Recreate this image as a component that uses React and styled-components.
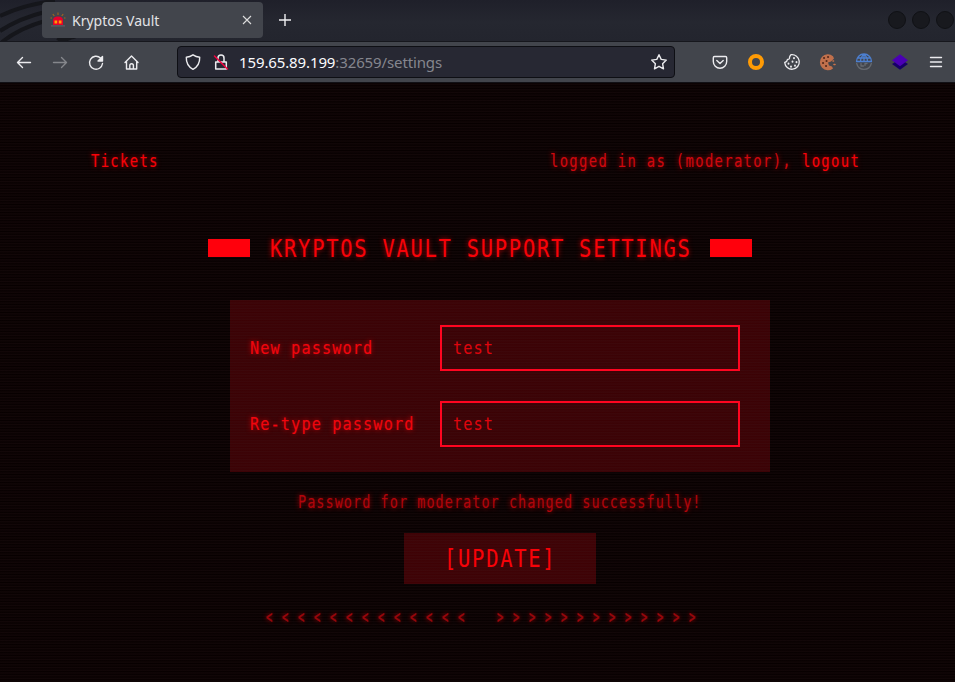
import React from 'react';
import styled, { createGlobalStyle } from 'styled-components';

const GlobalStyle = createGlobalStyle`
  * { box-sizing: border-box; }
  html, body { margin: 0; padding: 0; background: #080000; }
  body { width: 955px; height: 682px; overflow: hidden; }
`;

const Window = styled.div`
  width: 955px; height: 682px; display: flex; flex-direction: column;
  font-family: "Noto Sans", sans-serif; color: #fbfbfe;
`;
const TabStrip = styled.div`
  position: relative; height: 42px; display: flex; align-items: flex-start; padding: 2px 0 0 42px;
  background: linear-gradient(#1f202a, #252730 55%, #23252e); border-bottom: 1px solid #16171d; overflow: hidden;
`;
const Wallpaper = styled.svg`position: absolute; left: 0; top: 0;`;
const Tab = styled.div`
  position: relative; width: 221px; height: 36px; border-radius: 4px; background: #42454c;
  display: flex; align-items: center; padding: 0 10px 0 8px; font-size: 14px;
`;
const Favicon = styled.svg`width: 16px; height: 16px; flex: none; fill: none;`;
const TabTitle = styled.span`flex: 1; margin-left: 6px; white-space: nowrap; color: #e2e3e6;`;
const NewTab = styled.div`margin: 11px 0 0 15px; height: 14px; display: flex;`;
const WindowDots = styled.div`
  display: flex; gap: 6px; margin: 9px 1px 0 auto;
`;
const Dot = styled.i`
  width: 18px; height: 18px; border-radius: 50%; background: #18191e; border: 1px solid #101115; flex: none;
`;
const Toolbar = styled.div`
  height: 40px; background: #42454c; display: flex; align-items: center; padding: 0 9px 0 14px;
`;
const NavButtons = styled.div`display: flex; gap: 16px; width: 163px;`;
const AddressBar = styled.div`
  width: 498px; height: 32px; border: 1px solid #0e0f14; border-radius: 4px; background: #272833;
  display: flex; align-items: center; padding: 0 5px 0 5px; gap: 8px;
`;
const Address = styled.div`
  flex: 1; font-size: 15px; letter-spacing: -0.12px; white-space: nowrap; color: #85868e;
  b { font-weight: 400; color: #fbfbfe; }
`;
const Extensions = styled.div`display: flex; gap: 16px; margin-left: auto;`;
const Icon = styled.svg`
  width: 20px; height: 20px; flex: none; fill: none; stroke: ${p => p.$color || '#ececef'};
  stroke-width: ${p => p.$weight || 1.3}; stroke-linecap: round; stroke-linejoin: round;
`;

const Page = styled.main`
  position: relative; height: 600px; border-top: 1px solid #111015; background: #070000;
  display: flex; flex-direction: column; align-items: center; overflow: hidden;
`;
const Scanlines = styled.div`
  position: absolute; inset: 0; pointer-events: none;
  background: repeating-linear-gradient(rgba(70, 40, 45, 0) 0px, rgba(70, 40, 45, 0.18) 1.35px, rgba(70, 40, 45, 0) 2.7px);
`;
const TermBox = styled.span`
  position: relative; z-index: 1;
  display: inline-block; width: ${p => p.$n * p.$pitch}px; height: 30px; white-space: pre;
  span {
    display: block; width: max-content; transform-origin: 0 50%; transform: scaleX(${p => p.$squeeze});
    font: ${p => p.$size}px/30px "DejaVu Sans Mono", monospace;
    letter-spacing: ${p => p.$pitch / p.$squeeze - p.$size * 0.602}px;
    color: ${p => p.$color};
    -webkit-text-stroke: ${p => p.$stroke}px ${p => p.$color};
    text-shadow: ${p => (p.$glow ? '0 0 6px rgba(255, 0, 10, 0.7)' : 'none')};
  }
`;
function Term({ children, size = 17.5, pitch = 9.68, color = '#f80208', glow = true, squeeze = 0.79, stroke = 0.15 }) {
  return (
    <TermBox $n={children.length} $size={size} $pitch={pitch} $color={color} $glow={glow} $squeeze={squeeze} $stroke={stroke}>
      <span>{children}</span>
    </TermBox>
  );
}
const Nav = styled.nav`
  width: 769px; margin: 63px 0 0 -4px; display: flex; justify-content: space-between;
`;
const Heading = styled.h1`
  margin: 56px 0 0 5px; display: flex; align-items: center; height: 32px; font-weight: 400;
`;
const Block = styled.i`position: relative; z-index: 1; width: 42px; height: 18px; background: #ff000c;`;
const HeadingText = styled.div`margin: 0 19px 0 20px; display: flex; width: 421px;`;
const Panel = styled.section`
  width: 540px; height: 172px; margin: 36px 0 0 45px; padding: 25px 30px 25px 20px; background: #3b0104;
  display: flex; flex-direction: column; gap: 30px;
`;
const Field = styled.label`display: flex; align-items: center; justify-content: space-between; height: 46px;`;
const Input = styled.div`
  width: 300px; height: 46px; border: 2px solid #ff0520; padding: 6px 11px; position: relative; z-index: 1;
`;
const Message = styled.div`margin: 15px 0 0 45px; height: 30px;`;
const Update = styled.button`
  width: 192px; height: 51px; margin: 16px 0 0 45px; border: 0; padding: 0 0 2px; background: #3e0104;
  display: flex; align-items: center; justify-content: center;
`;
const Arrows = styled.div`margin: 18px 0 0 15px; display: flex; gap: 23px; height: 30px;`;

const cap = { size: 25.5, pitch: 14.05, squeeze: 0.8, stroke: 0.1 };
const body = { size: 18.5, pitch: 10.28, squeeze: 0.82 };
const arrow = { size: 18, pitch: 16, squeeze: 0.58, color: '#98070c', stroke: 0.5 };

export default function App() {
  return (
    <Window>
      <GlobalStyle />
      <TabStrip>
        <Wallpaper width="150" height="42" fill="none" stroke="#15161b" strokeWidth="4">
          <path d="M0 16Q25 4 55 1M0 31Q20 18 45 12M2 42Q20 28 45 21" />
          <path d="M60 42Q64 36 75 34" strokeWidth="9" />
        </Wallpaper>
        <Tab>
          <Favicon viewBox="0 0 16 16">
            <path d="M3 13V8.500q0-4 5-4t5 4V13z" fill="#e5002c" />
            <path d="M1 13.300h14v1.200H1z" fill="#5e6066" />
            <path d="M4.500 8.500h2.700v3H4.500zM8.800 8.500h2.700v3H8.800z" fill="#ff9d00" />
            <path d="M8 0.500v2.500M2.800 2l1.500 2M13.200 2l-1.500 2M0.500 6h1.500M15.500 6H14" stroke="#a5651d" strokeWidth="1.100" />
          </Favicon>
          <TabTitle>Kryptos Vault</TabTitle>
          <svg width="12" height="12" viewBox="0 0 12 12" stroke="#ddd" strokeWidth="1.1"><path d="M2 2l8 8M10 2l-8 8" /></svg>
        </Tab>
        <NewTab><svg width="14" height="14" viewBox="0 0 14 14" stroke="#f0f0f2" strokeWidth="1.4"><path d="M7 1v12M1 7h12" /></svg></NewTab>
        <WindowDots><Dot /><Dot /><Dot /></WindowDots>
      </TabStrip>
      <Toolbar>
        <NavButtons>
          <Icon viewBox="0 0 20 20" $weight={1.4}><path d="M3.5 10.500h13M8.500 5.500l-5 5 5 5" /></Icon>
          <Icon viewBox="0 0 20 20" $weight={1.4} $color="#85878c"><path d="M3.5 10.500h13M11.500 5.500l5 5-5 5" /></Icon>
          <Icon viewBox="0 0 20 20" $weight={1.4}><path d="M16.500 11.500A6.500 6.500 0 1 1 14.500 6" /><path d="M16.500 4.500V9H12z" fill="#ececef" /></Icon>
          <Icon viewBox="0 0 20 20" $weight={1.4}><path d="M3 10.500L9.500 4l6.500 6.500M4.500 9.500V17h10.200V9.500M7.800 17v-3.500a1.800 1.800 0 0 1 3.600 0V17" /></Icon>
        </NavButtons>
        <AddressBar>
          <Icon viewBox="0 0 20 20" $weight={1.4}><path d="M10 2.800Q13 4.800 16.700 5.200Q17 13.500 10 17.300Q3 13.500 3.300 5.200Q7 4.800 10 2.800z" /></Icon>
          <Icon viewBox="0 0 20 20" $weight={1.5}>
            <path d="M4.700 10h10.600v7H4.700zM7 10V6a3 3 0 0 1 6 0v4" />
            <path d="M3.500 4l13 13" stroke="#f5003f" />
          </Icon>
          <Address><b>159.65.89.199</b>:32659/settings</Address>
          <Icon viewBox="0 0 20 20" $weight={1.4}><path d="M10 2.700l2.200 4.700 5.100.7-3.700 3.600.9 5.100-4.500-2.500-4.500 2.500.9-5.100-3.700-3.600 5.100-.7z" /></Icon>
        </AddressBar>
        <Extensions>
          <Icon viewBox="0 0 20 20" $weight={1.4}><path d="M4.500 4.500h11a1.200 1.200 0 0 1 1.200 1.200V9.500a6.700 6.700 0 0 1-13.400 0V5.700A1.200 1.200 0 0 1 4.500 4.500zM6.800 8.500L10 11.600l3.200-3.100" /></Icon>
          <Icon viewBox="0 0 20 20" $color="#ff9b05" $weight={4}><circle cx="10" cy="10" r="6" /></Icon>
          <Icon viewBox="0 0 20 20" $weight={1.3}>
            <path d="M9 2.700A7.300 7.300 0 1 1 2.700 10.500Q5 10 5.500 7.500 8 7.500 7.500 5.200 8 4 9 2.700z" />
            <path d="M12 6v.2M14.500 10v.2M10.500 9.500v.2M6.500 11.500v.2M9 14.500v.2M13 13.500v.2" strokeWidth="1.900" />
          </Icon>
          <Icon viewBox="0 0 20 20" $color="none">
            <path d="M15 4.200A8 8 0 1 0 15 16.500l-1-2-3-1-1-3 3-1 3-3z" fill="#c0704c" />
            <path d="M6 6h.1M10 5h.1M5 11h.1M8.500 9h.1M8 14h.1" stroke="#55291b" strokeWidth="2" />
            <path d="M15 9h.5M16 12.500h1" stroke="#c8734a" strokeWidth="1.6" />
          </Icon>
          <Icon viewBox="0 0 20 20" $color="#4c7fd0" $weight={1.3}>
            <path d="M2.500 9.500a7.500 7.500 0 0 1 15 0zM10 2.500v7M3.800 6h12.400M6.500 9.500q0-4.500 3.500-7 3.500 2.500 3.500 7" />
            <path d="M2.700 11.500a7.500 7.500 0 0 0 14.600 0M7 11.500V14h2.500M13 11.500h-2v2" stroke="#666a70" />
          </Icon>
          <Icon viewBox="0 0 20 20" $color="none">
            <path d="M2 12l8-5 8 5-8 5.800z" fill="#170068" /><path d="M2 8.300L10 2.200l8 6.100-8 6z" fill="#4b00b5" />
          </Icon>
          <Icon viewBox="0 0 20 20" $weight={1.4}><path d="M4.500 5.500h11M4.500 10h11M4.500 14.500h11" /></Icon>
        </Extensions>
      </Toolbar>
      <Page>
        <Nav>
          <Term>Tickets</Term>
          <div><Term color="#cf080e">{'logged in as (moderator), '}</Term><Term>logout</Term></div>
        </Nav>
        <Heading>
          <Block />
          <HeadingText><Term {...cap}>KRYPTOS VAULT SUPPORT SETTINGS</Term></HeadingText>
          <Block />
        </Heading>
        <Panel>
          <Field><Term {...body} color="#f0060e">New password</Term><Input><Term {...body} glow={false} color="#de050d">test</Term></Input></Field>
          <Field><Term {...body} color="#f0060e">Re-type password</Term><Input><Term {...body} glow={false} color="#de050d">test</Term></Input></Field>
        </Panel>
        <Message><Term pitch={9.17} squeeze={0.77} color="#b0050b">Password for moderator changed successfully!</Term></Message>
        <Update><Term {...cap} glow={false}>[UPDATE]</Term></Update>
        <Arrows>
          <Term {...arrow}>{'<<<<<<<<<<<<<'}</Term>
          <Term {...arrow}>{'>>>>>>>>>>>>>'}</Term>
        </Arrows>
        <Scanlines />
      </Page>
    </Window>
  );
}
